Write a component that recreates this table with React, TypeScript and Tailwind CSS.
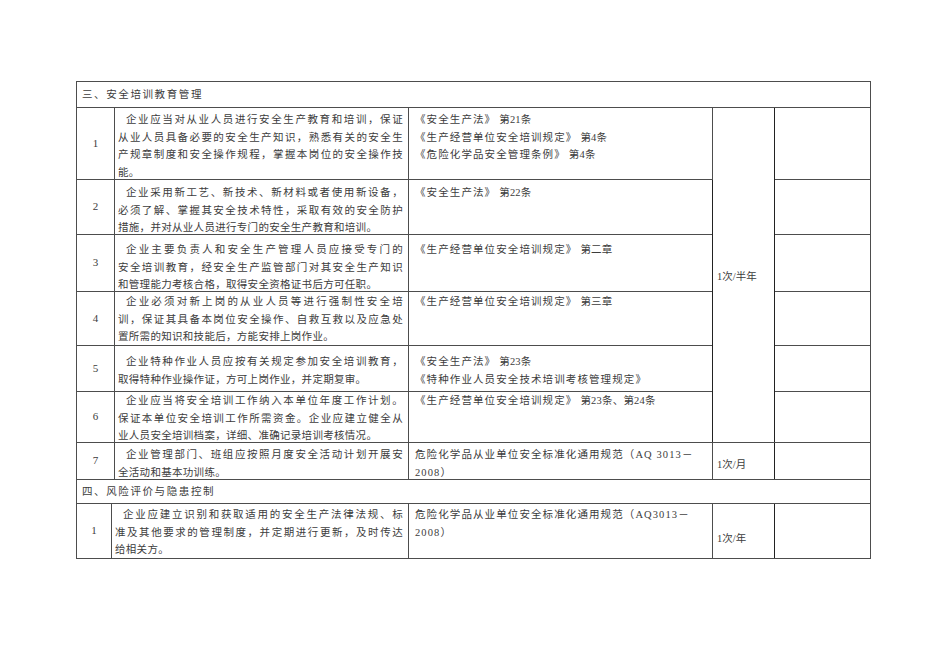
import React from 'react';

type Ref = { book: string; tail?: string };

type Row = {
  no: string;
  lines: string[];
  refs: Ref[];
  h: string;
  pt: string;
};

const sectionOne: Row[] = [
  {
    no: '1',
    lines: [
      '企业应当对从业人员进行安全生产教育和培训，保证',
      '从业人员具备必要的安全生产知识，熟悉有关的安全生',
      '产规章制度和安全操作规程，掌握本岗位的安全操作技',
      '能。',
    ],
    refs: [
      { book: '《安全生产法》', tail: '第21条' },
      { book: '《生产经营单位安全培训规定》', tail: '第4条' },
      { book: '《危险化学品安全管理条例》', tail: '第4条' },
    ],
    h: 'h-[72px]',
    pt: 'pt-[3px]',
  },
  {
    no: '2',
    lines: [
      '企业采用新工艺、新技术、新材料或者使用新设备，',
      '必须了解、掌握其安全技术特性，采取有效的安全防护',
      '措施，并对从业人员进行专门的安全生产教育和培训。',
    ],
    refs: [{ book: '《安全生产法》', tail: '第22条' }],
    h: 'h-[55px]',
    pt: 'pt-[4px]',
  },
  {
    no: '3',
    lines: [
      '企业主要负责人和安全生产管理人员应接受专门的',
      '安全培训教育，经安全生产监管部门对其安全生产知识',
      '和管理能力考核合格，取得安全资格证书后方可任职。',
    ],
    refs: [{ book: '《生产经营单位安全培训规定》', tail: '第二章' }],
    h: 'h-[57px]',
    pt: 'pt-[6px]',
  },
  {
    no: '4',
    lines: [
      '企业必须对新上岗的从业人员等进行强制性安全培',
      '训，保证其具备本岗位安全操作、自救互救以及应急处',
      '置所需的知识和技能后，方能安排上岗作业。',
    ],
    refs: [{ book: '《生产经营单位安全培训规定》', tail: '第三章' }],
    h: 'h-[54px]',
    pt: 'pt-[1px]',
  },
  {
    no: '5',
    lines: [
      '企业特种作业人员应按有关规定参加安全培训教育，',
      '取得特种作业操作证，方可上岗作业，并定期复审。',
    ],
    refs: [
      { book: '《安全生产法》', tail: '第23条' },
      { book: '《特种作业人员安全技术培训考核管理规定》' },
    ],
    h: 'h-[46px]',
    pt: 'pt-[7px]',
  },
  {
    no: '6',
    lines: [
      '企业应当将安全培训工作纳入本单位年度工作计划。',
      '保证本单位安全培训工作所需资金。企业应建立健全从',
      '业人员安全培训档案，详细、准确记录培训考核情况。',
    ],
    refs: [{ book: '《生产经营单位安全培训规定》', tail: '第23条、第24条' }],
    h: 'h-[51px]',
    pt: 'pt-[0px]',
  },
];

const rowSeven: Row = {
  no: '7',
  lines: ['企业管理部门、班组应按照月度安全活动计划开展安', '全活动和基本功训练。'],
  refs: [{ book: '危险化学品从业单位安全标准化通用规范（AQ 3013－' }, { book: '2008）' }],
  h: 'h-[37px]',
  pt: 'pt-[3px]',
};

const rowEight: Row = {
  no: '1',
  lines: [
    '企业应建立识别和获取适用的安全生产法律法规、标',
    '准及其他要求的管理制度，并定期进行更新，及时传达',
    '给相关方。',
  ],
  refs: [{ book: '危险化学品从业单位安全标准化通用规范（AQ3013－' }, { book: '2008）' }],
  h: 'h-[55px]',
  pt: 'pt-[2px]',
};

const cell = 'border border-[#4d4d4d] p-0';

function Clause({ lines }: { lines: string[] }) {
  return (
    <div className="h-0">
      {lines.map((l, i) => (
        <div
          key={i}
          className={
            'whitespace-nowrap ' +
            (i === 0 ? 'indent-[8px] ' : '') +
            (i < lines.length - 1 ? 'text-justify [text-align-last:justify]' : '')
          }
        >
          {l}
        </div>
      ))}
    </div>
  );
}

function Refs({ refs }: { refs: Ref[] }) {
  return (
    <div className="h-0">
      {refs.map((r, i) => (
        <div key={i} className="whitespace-nowrap">
          <span className="tracking-[1.1px]">{r.book}</span>
          {r.tail && <span className="ml-[3px] tracking-[0.2px]">{r.tail}</span>}
        </div>
      ))}
    </div>
  );
}

function Body({ row, freq }: { row: Row; freq?: React.ReactNode }) {
  return (
    <tr className={row.h}>
      <td className={cell + ' text-center align-middle text-[11px]'}>{row.no}</td>
      <td className={cell + ' align-top pl-[3px] pr-[5px] tracking-[0.3px] ' + row.pt}>
        <Clause lines={row.lines} />
      </td>
      <td className={cell + ' align-top pl-[6px] ' + row.pt}>
        <Refs refs={row.refs} />
      </td>
      {freq}
      <td className={cell}></td>
    </tr>
  );
}

function Section({ title, h }: { title: string; h: string }) {
  return (
    <tr className={h}>
      <td colSpan={5} className={cell + ' pl-[5px] align-middle tracking-[1.6px]'}>
        {title}
      </td>
    </tr>
  );
}

export default function App() {
  return (
    <div className="w-[950px] h-[672px] bg-white font-['Liberation_Serif','Noto_Sans_CJK_SC',serif] text-[10.5px] leading-[17.6px] text-[#3c3c3c]">
      <div className="pt-[81px] pl-[76px]">
        <table className="table-fixed border-collapse w-[794px]">
          <colgroup>
            <col className="w-[38px]" />
            <col className="w-[294px]" />
            <col className="w-[304px]" />
            <col className="w-[62px]" />
            <col className="w-[96px]" />
          </colgroup>
          <tbody>
            <Section title="三、安全培训教育管理" h="h-[26px]" />
            {sectionOne.map((row, i) => (
              <Body
                key={i}
                row={row}
                freq={
                  i === 0 ? (
                    <td rowSpan={6} className={cell + ' align-middle pl-[4px] border-x-[#222] pt-[3px]'}>
                      1次/半年
                    </td>
                  ) : undefined
                }
              />
            ))}
            <Body
              row={rowSeven}
              freq={<td className={cell + ' align-middle pl-[4px] pt-[8px] border-x-[#222]'}>1次/月</td>}
            />
          </tbody>
        </table>
        <table className="table-fixed border-collapse w-[794px] -mt-px">
          <colgroup>
            <col className="w-[35px]" />
            <col className="w-[297px]" />
            <col className="w-[304px]" />
            <col className="w-[62px]" />
            <col className="w-[96px]" />
          </colgroup>
          <tbody>
            <Section title="四、风险评价与隐患控制" h="h-[24px]" />
            <Body
              row={rowEight}
              freq={<td className={cell + ' align-middle pl-[4px] pt-[15px] border-x-[#222]'}>1次/年</td>}
            />
          </tbody>
        </table>
      </div>
    </div>
  );
}
